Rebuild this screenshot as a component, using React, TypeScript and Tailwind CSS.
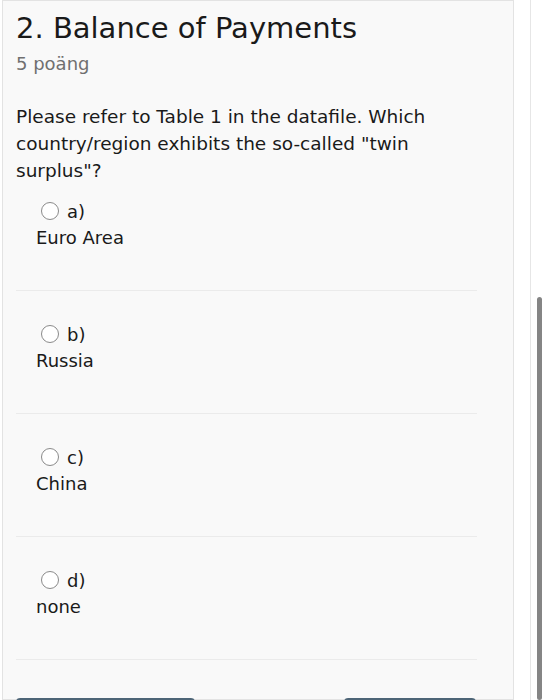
import React from 'react';

const options = [
  { key: 'a', label: 'Euro Area' },
  { key: 'b', label: 'Russia' },
  { key: 'c', label: 'China' },
  { key: 'd', label: 'none' },
];

export default function App() {
  return (
    <div className="flex h-[700px] w-[547px] overflow-hidden bg-white text-[#1a1a1a]" style={{ fontFamily: '"DejaVu Sans", Verdana, sans-serif' }}>
      {/* Question card */}
      <div className="ml-[2px] w-[512px] shrink-0 border border-[#e3e3e3] bg-[#f9f9f9] pl-[13px] pr-[35px]">
        <h2 className="pt-[8px] text-[29px] leading-[38px]">2. Balance of Payments</h2>
        <div className="mt-[5px] text-[18px] leading-[24px] text-[#707070]">5 poäng</div>

        <p className="mt-[27px] text-[18.5px] leading-[27px]">
          Please refer to Table 1 in the datafile. Which country/region exhibits the so-called "twin surplus"?
        </p>

        <div className="mt-[15px]">
          {options.map((o, i) => (
            <div key={o.key} className={i === 0 ? '' : 'pt-[31px]'}>
              <div className="pl-[20px]">
                <label className="flex h-[24px] items-center gap-[8px] pl-[5px] text-[18px]">
                  <span className="h-[18px] w-[18px] rounded-full border-[1.5px] border-[#8a8a8a] bg-white" />
                  <span>{o.key})</span>
                </label>
                <div className="mt-[3px] text-[18px] leading-[24px]">{o.label}</div>
              </div>
              <div className="mt-[40px] h-px w-[461px] bg-[#ebebeb]" />
            </div>
          ))}
        </div>

        <div className="mt-[38px] flex justify-between pr-[2px]">
          <div className="h-[20px] w-[179px] rounded-t-[4px] border-t-[3px] border-[#4d6577] bg-[#f3f3f3]" />
          <div className="h-[20px] w-[132px] rounded-t-[4px] border-t-[3px] border-[#4d6577] bg-[#f3f3f3]" />
        </div>
      </div>

      {/* gap + scroll area */}
      <div className="w-[16px] shrink-0" />
      <div className="w-px shrink-0 bg-[#e6e6e6]" />
      <div className="flex w-[16px] shrink-0 justify-center pt-[297px]">
        <div className="h-full w-[5px] rounded-full bg-[#858585]" />
      </div>
    </div>
  );
}
